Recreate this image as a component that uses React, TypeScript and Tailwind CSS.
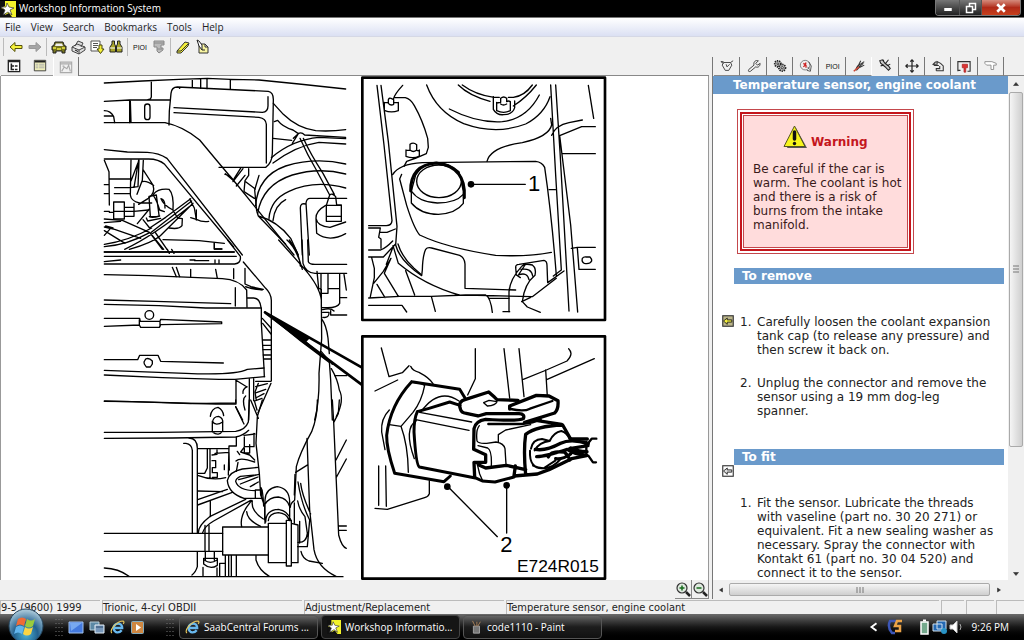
import React, { useState } from 'react';

const stroke = { fill: 'none', stroke: '#000', strokeWidth: 4, strokeLinejoin: 'round', strokeLinecap: 'round' } as const;

// Small 16x16 icon wrapper
const Icon: React.FC<{ children: React.ReactNode; className?: string }> = ({ children, className = 'h-4 w-4' }) => (
    <svg viewBox="0 0 16 16" className={`shrink-0 ${className}`} fill="none" stroke="#222" strokeWidth="1" aria-hidden="true">
        {children}
    </svg>
);

const StarLogo = ({ className }: { className?: string }) => (
    <Icon className={className}>
        <rect width="16" height="16" fill="#111" stroke="none" />
        <path d="M5 0H16V16H12L9 12L5 14L6 9L1 7L5 5Z" fill="#f3f32a" stroke="none" />
        <path d="M7 2L9 6L14 7L10 9L12 14L8 11L3 14L5 9L1 6L6 6Z" fill="#fff" stroke="#333" strokeWidth=".7" />
    </Icon>
);

const ArrowLeft = () => (
    <Icon>
        <path d="M2 8L7 3.5V6.5H14V9.5H7V12.5Z" fill="#f5f03a" stroke="#55520a" />
    </Icon>
);

const ArrowRight = () => (
    <Icon>
        <path d="M14 8L9 3.5V6.5H2V9.5H9V12.5Z" fill="#a5a5a5" stroke="#999" />
    </Icon>
);

const Car = () => (
    <Icon>
        <path d="M4 3H12L13.5 7H15V11H14V14H11V12H5V14H2V11H1V7H2.5Z" fill="#77751d" stroke="#222" />
        <path d="M5 4.5H11L12 7H4Z" fill="#eee" stroke="none" />
        <path d="M2 9H5M11 9H14M6 10H10" stroke="#f0ec45" strokeWidth="1.5" />
    </Icon>
);

const Printer = () => (
    <Icon>
        <path d="M5 7L8 2L13 4L11 8M2 8L7 5L15 8V11L9 15L2 12ZM2 8L9 11L15 8M9 11V15" fill="#ddd" stroke="#444" />
        <path d="M5 11L8 12.5" stroke="#111" />
    </Icon>
);

const PageDown = () => (
    <Icon>
        <path d="M2 2H11V12H2ZM4 4.500H9M4 6.500H9M4 8.500H8" fill="#fff" stroke="#555" />
        <path d="M10 6H13V10H15L11.500 14.500L8 10H10Z" fill="#f5f03a" stroke="#4a4810" />
    </Icon>
);

const Binoculars = () => (
    <Icon>
        <path d="M4 2H6.500V5L7.500 7V13H2V8L4 5ZM12 2H9.500V5L8.500 7V13H14V8L12 5Z" fill="#a8a42a" stroke="#222" />
        <path d="M2 9H7M9 9H14" stroke="#fff" />
    </Icon>
);

const Funnel = () => (
    <Icon>
        <path d="M3 2H13V6H10V9H12V11L8 14L6 12V8H3ZM3 4H13M6 10H11" fill="#bbb" stroke="#888" />
    </Icon>
);

const Eraser = () => (
    <Icon>
        <path d="M2 12L10 3L14 4L13 7L6 14L2 14Z" fill="#f5f03a" stroke="#333" />
        <path d="M2 12L6 12L13 5" stroke="#333" />
    </Icon>
);

const NotePen = () => (
    <Icon>
        <path d="M5 5H11L14 8V14H5ZM11 5V8H14" fill="#f8f5a2" stroke="#333" />
        <path d="M3 1L5 7L8 11L8 6L5 2Z" fill="#fff" stroke="#222" />
        <path d="M8 11H11" />
    </Icon>
);

const PioiLabel = () => <span className="font-['Liberation_Sans'] text-[7px] leading-none text-[#111]">PIOI</span>;

const toolbarGroups: { name: string; icon: React.ReactNode }[][] = [
    [
        { name: 'Back', icon: <ArrowLeft /> },
        { name: 'Forward', icon: <ArrowRight /> },
    ],
    [
        { name: 'Select car', icon: <Car /> },
        { name: 'Print', icon: <Printer /> },
        { name: 'Next document', icon: <PageDown /> },
        { name: 'Find', icon: <Binoculars /> },
    ],
    [
        { name: 'Symbols', icon: <PioiLabel /> },
        { name: 'Filter', icon: <Funnel /> },
    ],
    [
        { name: 'Highlight', icon: <Eraser /> },
        { name: 'Add note', icon: <NotePen /> },
    ],
];

const viewTabs = [
    {
        name: 'Tree',
        icon: (
            <Icon className="h-[14px] w-[14px]">
                <path d="M1.500 1.500H14.500V14.500H1.500ZM1.500 3H14.500" fill="#fff" stroke="#222" strokeWidth="1.500" />
                <path d="M5 5V12H8M5 8H8M9 8H12M9 12H12" strokeWidth="1.800" />
            </Icon>
        ),
    },
    {
        name: 'Document',
        icon: (
            <Icon className="h-[14px] w-[14px]">
                <path d="M1.500 1.500H14.500V13.500H1.500Z" fill="#eeeeba" stroke="#333" />
                <path d="M2 3H14" strokeWidth="2" />
                <path d="M3 6H6M3 8H6M3 10H6M7 6H13M7 8H13M7 10H13" stroke="#aaa" />
            </Icon>
        ),
    },
    {
        name: 'Picture',
        icon: (
            <Icon className="h-[14px] w-[14px]">
                <path d="M1.500 2.500H14.500V14.500H1.500ZM1.500 4.500H14.500M3 13L6 8L9 10L11 6L13 13M4 7H6" stroke="#aaa" strokeWidth="1.300" />
            </Icon>
        ),
    },
];

const infoTabs = [
    {
        name: 'Specifications',
        icon: (
            <Icon className="h-[14px] w-[14px]">
                <path d="M4 4H12L13.500 7L10 13H6L2.500 7ZM1 3L4 5M15 2L12 4M1 3H4M7 6L8 9L11 6" stroke="#333" />
            </Icon>
        ),
    },
    {
        name: 'Tools',
        icon: (
            <Icon className="h-[14px] w-[14px]">
                <path d="M2 12L8 7C7 3 10 1 13 2L10 5L12 7L15 5C15 9 12 10 10 9L4 14C2 15 1 14 2 12Z" fill="#eee" stroke="#333" />
            </Icon>
        ),
    },
    {
        name: 'Technical description',
        icon: (
            <Icon className="h-[14px] w-[14px]">
                <circle cx="5.500" cy="5.500" r="3.500" fill="#bbb" strokeWidth="2" strokeDasharray="1.500 1" />
                <circle cx="10.500" cy="10" r="3.800" fill="#bbb" strokeWidth="2" strokeDasharray="1.500 1" />
                <circle cx="5.500" cy="5.500" r="1" fill="#fff" />
                <circle cx="10.500" cy="10" r="1.300" fill="#fff" />
            </Icon>
        ),
    },
    {
        name: 'Fault diagnosis',
        icon: (
            <Icon className="h-[14px] w-[14px]">
                <circle cx="7" cy="7" r="5.500" fill="#eee" stroke="#777" />
                <path d="M9 13L13 14L14 8L11 3M10 9L12 12" stroke="#444" />
                <path d="M5 5L8 7V10M8 4L7 7L5 9" stroke="#c22" strokeWidth="1.500" />
            </Icon>
        ),
    },
    { name: 'Symbols', icon: <PioiLabel /> },
    {
        name: 'Wiring',
        icon: (
            <Icon className="h-[14px] w-[14px]">
                <path d="M4 12L8 7L14 3M5 13L8 10L14 7M5 10L8 6L10 2M8 9L13 5" stroke="#333" strokeWidth="1.200" />
                <path d="M2 14L8 9" stroke="#c43" strokeWidth="1.800" />
            </Icon>
        ),
    },
    {
        name: 'Adjustment',
        icon: (
            <Icon className="h-[14px] w-[14px]">
                <path d="M2 3L5 2L8 6L12 9L14 12L12 14L8 10L3 6ZM12 2L8 7M6 2L7 5M10 9L14 7M3 9L7 8" fill="#ccc" stroke="#222" strokeWidth="1.200" />
            </Icon>
        ),
    },
    {
        name: 'Location',
        icon: (
            <Icon className="h-[14px] w-[14px]">
                <path d="M8 1V15M1 8H15M6 3L8 1L10 3M6 13L8 15L10 13M3 6L1 8L3 10M13 6L15 8L13 10" strokeWidth="1.400" />
            </Icon>
        ),
    },
    {
        name: 'Service',
        icon: (
            <Icon className="h-[14px] w-[14px]">
                <path d="M6 13.500H14V8L11 5L7 3V6H2.500L5 3.500H7M2.500 6L4 7.500H9M6 13.500V11H10V8" stroke="#333" strokeWidth="1.200" />
            </Icon>
        ),
    },
    {
        name: 'Bulletins',
        icon: (
            <Icon className="h-[14px] w-[14px]">
                <path d="M1 14V3H15V14H12M1 13H4" stroke="#333" strokeWidth="1.300" />
                <path d="M6 6H12V10H10V15H8V10H6Z" fill="#d33" stroke="#a22" strokeWidth=".8" />
            </Icon>
        ),
    },
    {
        name: 'References',
        icon: (
            <Icon className="h-[14px] w-[14px]">
                <path d="M1 3H9L14 5V7H11V12H8V7H3L1 5Z" fill="#fff" stroke="#888" />
            </Icon>
        ),
    },
];

const menuItems = ['File', 'View', 'Search', 'Bookmarks', 'Tools', 'Help'];

// Engine bay overview with the two detail frames
const EngineDrawing = () => (
    <svg viewBox="104 76 506 504" className="h-full max-w-full" role="img" aria-label="Engine coolant temperature sensor, E724R015">
        {/* Upper part of the engine bay */}
        <g transform="translate(100 75) scale(.33333)" {...stroke}>
            <path d="M16 24L130 18L240 13L325 10L394 13L480 15L600 27L740 42M157 17V66Q156 73 146 74M16 79L92 75H212M92 76V143M94 79L96 142M280 15V36M305 13V40M324 11V41M394 13V42" />
            <path d="M16 107Q35 107 44 125L47 143M16 123H40" />
            <rect x="137" y="87" width="16" height="47" rx="8" />
            <path d="M210 150L211 108L216 55Q218 36 235 36L508 49Q524 52 523 76L520 235Q519 265 500 277H360M225 98L490 112Q508 111 507 90V65M225 113L480 127Q501 130 502 148V264M240 37L242 40" />
            <path d="M16 143H198Q252 154 302 195L352 255L420 336L585 540" />
            <path d="M16 224L85 231L145 232Q180 234 204 250L430 540M16 252H145Q178 251 197 268L404 516" />
            <path d="M523 85L553 118Q596 160 650 167Q695 170 740 164M526 140L536 136Q550 155 582 165L598 176L580 205M522 190L578 196M583 190L598 176Q607 170 617 180L740 187" />
            <path d="M517 248Q580 194 660 187L740 191M522 264Q592 212 660 202L740 207M470 392Q476 303 560 273Q650 246 740 267M476 415Q490 329 580 300Q660 276 740 297M510 430Q514 374 570 349Q647 313 740 339M522 437Q527 390 560 374" />
            <path d="M603 190Q625 240 652 285L692 360M613 190Q634 237 672 295L706 358M692 360L682 391V439H727V390H713L710 365Q700 353 692 360M682 391H727M682 424H727" />
            <path d="M743 370H633Q623 370 621 384L631 540M620 387Q604 383 604 399L610 540M680 391Q650 408 651 430Q655 454 693 457L740 441M651 430L653 475Q690 503 740 476" />
            <path d="M478 423Q535 438 575 490L598 540M474 411L478 423L560 508M480 301L467 345L473 408M435 350L466 370M440 320L469 342M435 350L438 317L449 301V281M378 298Q396 300 402 316L426 278M402 320L432 281M412 333L438 301M379 296L405 318" />
            <path d="M16 256L30 290L31 390M96 255L94 360Q96 378 121 384H158M105 337L119 255M96 318L117 263M133 256L130 316L114 358M120 255L117 335L94 338M31 312H94M47 338H94M16 329H28M16 356H28M132 284L162 330Q170 354 148 370L119 388M130 320Q142 316 164 331M46 356H94M31 412H44M16 409H31M44 381H76V432H44ZM76 397H105V424H76M44 409H76M76 409H105M105 385V421M105 409L148 405" />
            <path d="M163 358Q177 340 210 343Q225 358 222 405Q194 391 186 371Q199 374 198 399M163 361Q173 375 182 405L196 410M150 364L172 360L180 420M150 364L154 425H172M151 402L115 446M151 425Q159 430 182 423M142 429L146 438L185 430M132 434L152 459L200 427L275 371M157 472L278 378M222 406L236 429L250 431L249 452Q241 464 210 459M275 428L292 433Q310 442 329 439M292 405V435" />
            <path d="M16 432L70 436Q119 458 153 473L194 523M16 443L65 439M16 508Q90 497 158 459M16 515Q85 510 152 473M16 456L47 463L125 490M16 467L78 505M32 463L16 481M42 459L20 453M77 523Q160 485 280 388M91 523Q160 503 184 482L282 385M192 494L300 497L376 505M154 475L190 523M170 474L204 523M346 503V522H369M272 372L286 399L292 433M16 531H406" />
        </g>

        {/* Valve cover */}
        <g transform="translate(100 240) scale(.33333)" {...stroke}>
            <path d="M16 36H405M16 49H412M16 72H407Q427 70 424 49L386 0M16 65L65 60M205 28L211 40M218 28L225 40M346 9V27H368M273 60H288M287 62H329M348 60V68M360 60V68M275 88V110M350 88L355 115M404 86V116M220 82L232 110M232 82L242 110" />
            <path d="M16 104L150 107L370 116Q420 119 443 150L444 202M409 143V198M433 66L500 145Q516 160 517 181V422M438 85V132L456 140L493 148Q464 151 440 140M444 142L490 150M444 174H464Q482 174 486 202" />
            <path d="M16 180L170 184L395 191M16 193L180 197L320 204H487V250L495 384L496 410M16 235H122L124 244H183L185 238L368 246V251L185 254L181 262H125L121 255L16 259M121 239V256M183 245V260" />
            <circle cx="151" cy="225" r="13" />
            <path d="M16 359H116L122 346H177L185 364L373 369M16 391L260 400Q410 406 445 388L495 384M16 405L190 413L360 418H408L497 410M135 366L140 357Q150 352 160 363V372L154 381H142L136 372Z" />
            <path d="M16 483L185 487L350 492H411V420M451 416V474L449 540M464 416V482M410 420L444 441M444 440Q430 448 432 460M440 468Q428 477 438 510M410 500L431 540" />
            <path d="M490 235L516 264M491 250L516 282M492 300H516M492 316H516M492 329H516M493 345H516M494 357H516M470 424H516M516 430L477 518M470 440L505 431M470 459L500 448M470 474L495 461M470 482L489 475M478 430L468 456L472 481M466 482L474 510" />
            <path d="M539 0L615 85Q662 139 667 180L668 296L660 400Q662 483 647 540M564 0Q593 25 610 88M571 0Q601 37 604 78M609 0L612 70Q620 98 648 100H743M626 0L628 65Q631 73 648 73H743M654 94L659 145L667 148V202Q713 207 722 190V103M666 100V160H687V102M690 146H722M735 103L742 150M671 209Q696 203 705 213M672 232Q691 235 690 217L671 217M695 212V225H743M722 173H743" />
            <path d="M668 237Q682 255 687 294L691 341M667 335L700 373M691 364L695 420L700 540M697 386Q716 418 721 450Q737 480 712 530M707 407H743" />
            <path d="M498 217L788 382M498 217L788 434" strokeWidth="8" />
            <path d="M498 217L630 294L620 305L690 367L606 304Z" fill="#000" />
        </g>

        {/* Lower part of the engine bay */}
        <g transform="translate(100 400) scale(.33333)" {...stroke}>
            <path d="M16 97L180 97L410 94Q439 90 448 66L451 0M16 115L220 114L410 111Q432 108 449 91M410 20Q427 56 435 72M16 4L100 5L275 11L410 9V0M334 49Q337 25 357 22Q372 29 374 47M340 67Q343 49 359 49Q373 54 371 68V93Q360 110 340 96Z" />
            <path d="M340 64Q350 80 371 66M270 114Q295 115 295 145V400M254 130H261Q278 132 280 151V400M16 400H371M16 454H371M295 146H390M325 146V204L317 220H296M333 146V235M339 165L354 163V150M348 160L390 157L391 210M339 182H350V203H340V218H355V232H340M296 226Q338 243 380 233M412 112V138H390L388 225M376 195V209M436 111V140H465V100M437 140L425 156L452 165L467 180M436 145V159H452V134M435 106L468 102M411 183Q423 170 467 186M417 187L412 214M415 154L422 164" />
            <path d="M478 202L430 207Q389 216 385 242Q389 281 435 295H469M478 224L424 229Q411 235 410 244Q418 271 469 272M469 270H488V295H469ZM419 239L480 223M424 252L477 231M454 260L478 246M296 273L370 275M296 299L385 268M296 315L400 277M298 398Q298 376 332 350L440 298M311 398Q316 379 344 363L455 301M334 304V350M428 380Q422 352 444 320L458 301M443 335Q445 361 485 379M460 303Q455 332 493 357" />
            <path d="M490 0L475 50L471 130L481 220L485 285L497 319V360M455 0L478 55M655 0Q656 50 638 95Q602 160 592 200L587 300M486 263Q492 272 494 318M498 370V300Q500 265 535 260Q571 265 572 305V362M499 312Q510 292 538 291Q566 295 572 320M500 366Q500 330 538 328Q568 332 576 362M508 362Q510 340 538 338Q563 340 570 360" />
            <path d="M624 115L632 330L645 449Q655 503 711 529M700 0L704 65L719 405Q728 440 742 445M721 0L718 40L704 68M711 180L742 120M711 234L742 177M719 378H742M719 391H742M590 217L627 194M597 246Q608 314 632 360L625 440L596 440M605 250Q609 285 635 342M596 303Q601 330 618 350L625 400Q622 430 597 427M588 223L586 285M586 302Q574 310 574 322M586 309V370M602 364V429" />
            <path d="M371 381H508V465H371ZM508 370H562V488H508ZM562 361H577V498H562ZM577 370L597 375V488H577M471 467V480Q480 511 511 529M606 454Q610 475 630 483L670 490M295 455V500Q290 517 279 525M16 504Q58 505 90 529M16 530H732M318 376V452M330 376V452M319 455V482M346 455V481M314 475H355V496Q334 510 314 492ZM316 480Q334 494 354 480M312 502V528M354 504V528M362 529V490H378M379 468V528M389 468V528M397 468V528M412 468V528" />
        </g>

        {/* Detail 1: expansion tank */}
        <g transform="translate(360 75) scale(.33333)" {...stroke}>
            <rect x="10" y="8" width="728" height="727" fill="#fff" strokeWidth="8" />
            <path d="M54 31L75 210L99 437Q98 452 82 452H29M66 31L88 200L114 454L110 510Q122 557 188 602L190 585Q191 542 200 523Q205 516 218 519L302 541Q317 548 318 567V640L470 645M131 31Q108 56 104 70M76 82V106Q96 115 118 107V82M76 83H88V74Q91 67 98 71L104 74V88Q95 93 88 85M105 83H118M105 68H139Q155 72 166 92Q191 136 206 190L208 217L202 236Q170 251 143 259L135 274M141 225V244Q163 252 181 243V225M141 226H153V208Q163 200 173 209V226L181 228M154 226Q163 233 172 226" />
            <path d="M203 30Q232 110 314 146Q411 181 500 147Q555 118 573 65M271 102Q355 145 430 140Q503 132 541 60M298 30Q330 62 393 79M310 30Q350 60 405 67H421M532 30Q502 68 463 93M520 30Q496 63 463 67H448M403 65V103Q413 121 434 119Q461 119 467 98V78M413 82V107Q434 117 454 107V80Q448 76 443 80V70Q434 62 425 70V82L413 84M425 87Q433 93 443 87" />
            <path d="M575 30L590 300L607 585L583 603M590 30L603 230L630 708M688 31L704 130M709 155H668L602 182L635 450L656 711M578 181Q590 151 630 143L670 135M575 130L578 150Q570 185 490 203Q395 216 384 259M609 236H709M570 344H589M709 517H655L637 520M655 518L660 583H709" />
            <path d="M101 299Q120 267 190 263L530 259Q549 261 557 277Q578 420 592 602M128 298L122 312L143 391Q165 460 182 480Q264 519 410 541Q510 546 577 532M470 577Q470 568 480 568L555 556Q564 558 564 571L566 623L615 588M117 507Q128 545 165 580L184 596M102 512L118 565Q195 630 300 660M82 568L102 516M140 587L167 660M29 459H64L59 487L66 492V520M64 472H84L109 462M29 525H65Q82 518 101 498M29 546H73L109 508M38 548L46 580V608L34 665M29 669L122 664H217L320 660H380Q395 668 400 712M44 625L73 589L96 550L76 595L118 664M54 628L78 668M217 664L229 709M29 691H129L143 711M320 660L520 665L592 610M391 670H450M432 710H452M488 680L515 667" />
            <path d="M450 710V650Q453 612 488 574Q495 564 520 570Q533 580 528 601Q496 627 490 680L505 696L544 712M478 600Q505 590 510 614M486 583Q517 578 521 603M470 577L472 600L484 608M480 597L500 567" />
            <path d="M670 550Q674 545 681 546H693Q699 552 698 558Q693 568 676 565Q667 561 670 550Z" />
            <path d="M157 348V384Q185 418 238 418Q291 415 313 385V348L300 290Q270 263 232 263Q190 266 170 300Z" fill="#fff" />
            <path d="M157 348Q180 382 235 384Q290 384 313 358" />
            <ellipse cx="240" cy="319" rx="67" ry="49" fill="#fff" />
            <path d="M155 348Q154 270 232 264Q322 275 316 368" strokeWidth="9" />
            <path d="M345 328H499" />
            <circle cx="336" cy="328" r="8" fill="#000" />
            <text x="507" y="348" fontFamily="Liberation Sans, Arial, sans-serif" fontSize="66" fill="#000" stroke="none">1</text>
        </g>

        {/* Detail 2: sensor connector */}
        <g transform="translate(360 332) scale(.33333)" {...stroke}>
            <rect x="10" y="13" width="728" height="727" fill="#fff" strokeWidth="8" />
            <path d="M67 48L90 134L130 122L150 101M155 103Q160 116 180 121Q211 137 222 155M48 177L116 144M349 50V140L326 189M435 50L452 198M480 50L495 194M629 50Q645 66 624 87Q560 116 493 142M706 80L563 143M560 114L565 193M59 402V520M80 402L82 523M211 446V485Q209 493 197 497L85 532L48 529" />
            <path d="M158 150L186 155L197 160Q188 208 162 241L126 283L86 277M126 283Q147 340 148 421M186 239Q240 165 300 207M172 266Q133 290 166 380M91 234Q65 260 68 300L78 353" />
            <path d="M158 149L302 172L318 198M158 149Q93 219 83 310Q82 350 107 424L255 449L274 432" strokeWidth="9" />
            <path d="M175 239L210 229L272 210L303 220M175 239Q165 260 165 300Q171 399 181 405L353 439L370 447L408 450L465 435" strokeWidth="9" />
            <path d="M170 263L330 295M182 241L338 270" />
            <path d="M320 202L389 180L407 196L414 203L477 205M452 231V222L532 190L570 192L597 206Q599 232 587 243L497 271M320 202Q296 208 304 230Q306 242 322 244L357 252L382 245H480Q499 246 493 260Q480 268 380 262Q349 267 345 290L344 352L380 368V391H345L347 435" strokeWidth="10" />
            <path d="M455 231Q495 240 513 230L580 207M388 276H487Q525 272 545 262" strokeWidth="7" />
            <path d="M357 341L386 348Q399 355 397 402M361 281Q350 294 354 327Q360 336 383 334L411 330Q435 334 438 350L441 397M418 331V308L440 294L515 278M355 397L362 426L370 444M374 212L390 205L414 209Q410 220 385 222Z" />
            <path d="M358 398L380 408L442 400L500 413M500 429Q493 355 500 307Q532 282 611 279L635 321M608 277L535 266M469 402L465 432L535 426L570 413L638 380L683 371M638 321H685" strokeWidth="10" />
            <path d="M516 350Q521 322 549 321L572 327Q584 301 607 297Q625 302 632 322M572 327Q541 330 527 355M513 356Q510 413 555 408L589 386M522 401Q569 423 604 382" strokeWidth="6" />
            <path d="M529 352Q560 358 605 334Q635 319 688 335M533 374Q560 373 625 352Q646 367 683 370M568 375Q575 356 616 360Q630 373 632 384M632 350L687 341M635 348Q654 359 684 359M590 380Q611 383 635 366" strokeWidth="10" />
            <path d="M688 333L698 320H712M688 371L702 391H711M682 330V371" strokeWidth="7" />
            <path d="M267 464L415 614M443 460V603" />
            <circle cx="265" cy="464" r="8" fill="#000" />
            <circle cx="443" cy="460" r="8" fill="#000" />
            <g fontFamily="Liberation Sans, Arial, sans-serif" fill="#000" stroke="none">
                <text x="424" y="660" fontSize="66">2</text>
                <text x="474" y="720" fontSize="52">E724R015</text>
            </g>
        </g>
    </svg>
);

const StepMark = ({ active }: { active?: boolean }) => (
    <Icon className="h-3 w-3">
        <rect x="1" y="1" width="14" height="14" fill={active ? '#bbb58b' : '#fff'} stroke="#333" strokeWidth="1.500" />
        <path d="M2 8L7 4V6.500H13V9.500H7V12.500Z" fill={active ? '#f5f03a' : '#ddd'} stroke="#222" strokeWidth="1.200" />
    </Icon>
);

const WarningBox = () => (
    <section className="ml-6 mt-[15px] w-[177px] border border-[#c4474c] bg-white p-[2px]">
        <div className="border-2 border-[#c4161c] p-px">
            <div className="h-[133px] border border-[#c4474c] bg-[#ffdcdc] pl-[9px] pt-[9px]">
                <h2 className="flex gap-1 pl-[30px] text-[12px] font-bold leading-[18px] text-[#c4161c]">
                    <svg viewBox="0 0 24 24" className="h-6 w-6" aria-hidden="true">
                        <path d="M13 3L24 23H4Z" fill="#555" />
                        <path d="M11.500 1L22 21.500H1Z" fill="#f8f51c" stroke="#555320" />
                        <path d="M11.500 7V14" stroke="#111" strokeWidth="3.500" strokeLinecap="round" />
                        <circle cx="11.500" cy="18.500" r="1.700" fill="#111" />
                    </svg>
                    <span className="pt-2">Warning</span>
                </h2>
                <p className="mt-[11px] text-[12px] leading-[14px] text-[#3a1a1a]">
                    Be careful if the car is warm. The coolant is hot and there is a risk of burns from the intake manifold.
                </p>
            </div>
        </div>
    </section>
);

const SectionTitle = ({ children }: { children: React.ReactNode }) => (
    <h2 className="ml-[21px] mr-1 h-4 bg-[#6a9acb] pl-2 text-[12px] font-bold leading-4 text-white">{children}</h2>
);

const Step = ({ number, mark, children }: { number: number; mark?: boolean; children: React.ReactNode }) => (
    <li className="flex pl-[9px] pr-2">
        <span className="w-[18px] shrink-0">{mark && <StepMark active />}</span>
        <span className="w-[17px] shrink-0">{number}.</span>
        <span>{children}</span>
    </li>
);

const InfoPanel = () => (
    <div className="min-h-0 flex-1 overflow-hidden bg-white text-[12px] leading-[14px] text-[#222]">
        <h1 className="h-[18px] bg-[#6a9acb] pl-5 text-[12px] font-bold leading-[18px] text-white">
            Temperature sensor, engine coolant
        </h1>
        <WarningBox />
        <div className="mt-[14px]">
            <SectionTitle>To remove</SectionTitle>
            <ol className="mt-[31px] flex flex-col gap-[19px]">
                <Step number={1} mark>Carefully loosen the coolant expansion tank cap (to release any pressure) and then screw it back on.</Step>
                <Step number={2}>
                    Unplug the connector and remove the sensor using a 19 mm dog-leg
                    <br />
                    spanner.
                </Step>
            </ol>
        </div>
        <div className="mt-[31px]">
            <SectionTitle>To fit</SectionTitle>
            <div className="h-[31px] pl-[9px]">
                <StepMark />
            </div>
            <ol>
                <Step number={1}>
                    Fit the sensor. Lubricate the threads with vaseline (part no. 30 20 271) or equivalent. Fit a new sealing washer as necessary. Spray the connector with Kontakt 61 (part no. 30 04 520) and connect it to the sensor.
                </Step>
            </ol>
        </div>
    </div>
);

const IeLogo = () => (
    <Icon className="h-[15px] w-[15px]">
        <path d="M12.500 11Q10 14 6.500 13Q3 11 4 7Q6 3 10 4Q13 5 13 8.500H5" stroke="#69b9ee" strokeWidth="2.500" />
        <path d="M2 14C-1 11 7 1 14 1C16 2 14 4 14 4" stroke="#e9c85b" strokeWidth="1.200" />
    </Icon>
);

const tasks = [
    { name: 'SaabCentral Forums ...', icon: <IeLogo /> },
    { name: 'Workshop Informatio...', icon: <StarLogo className="h-[14px] w-[14px]" />, active: true },
    {
        name: 'code1110 - Paint',
        icon: (
            <Icon className="h-[14px] w-[14px]">
                <path d="M5 7H12V15H5Z" fill="#777" stroke="#aaa" />
                <path d="M7 7L4 1M9 7V2M10 7L13 2" stroke="#b2875b" />
            </Icon>
        ),
    },
];

const Grip = () => (
    <svg viewBox="0 0 8 18" className="h-[18px] w-2 shrink-0" aria-hidden="true">
        <path d="M1 1V18M4 1V18M7 1V18" stroke="#777" strokeDasharray="1 3" />
    </svg>
);

const Taskbar = () => (
    <footer className="flex h-[26px] shrink-0 items-center bg-linear-to-b from-[#6c6c6c] via-[#181818] via-50% to-black pl-2 pr-[15px] font-['Open_Sans','Noto_Sans',sans-serif] text-[10px] text-white">
        <button aria-label="Start" className="relative z-10 -mt-1 h-[34px] w-9 shrink-0">
            <svg viewBox="0 0 36 36" className="h-9 w-9">
                <defs>
                    <radialGradient id="orb" cx="50%" cy="75%" r="70%">
                        <stop offset="0" stopColor="#4bb4d8" />
                        <stop offset=".5" stopColor="#23618f" />
                        <stop offset="1" stopColor="#a5c4d6" />
                    </radialGradient>
                </defs>
                <circle cx="18" cy="18" r="17" fill="url(#orb)" stroke="#24445c" />
                <path d="M10 11Q14 8 18 11L16 18Q12 15 8 18Z" fill="#ef6b36" />
                <path d="M19 11Q23 14 27 11L25 18Q21 21 17 18Z" fill="#9acb3d" />
                <path d="M8 19Q12 16 16 19L14 26Q10 23 6 26Z" fill="#62b5ed" />
                <path d="M17 19Q21 22 25 19L23 26Q19 29 15 26Z" fill="#fbd544" />
            </svg>
        </button>
        <div className="ml-[11px] flex items-center gap-[5px]">
            <Grip />
            <button aria-label="Show desktop">
                <Icon><path d="M1 3H15V14H1Z" fill="#4379de" stroke="#a3c3ed" /><path d="M2 4H14L3 12Z" fill="#77a9f1" stroke="none" /></Icon>
            </button>
            <button aria-label="Switch windows">
                <Icon><path d="M1 3H10V11H1Z" fill="#5c89a5" stroke="#b7ced8" /><path d="M6 6H15V14H6Z" fill="#7797ba" stroke="#e5eef5" /><path d="M7 8H14" stroke="#2d4b6c" /></Icon>
            </button>
            <button aria-label="Internet Explorer"><IeLogo /></button>
            <button aria-label="Media player">
                <Icon><rect x="1.500" y="2.500" width="12" height="12" rx="1" fill="#ce8742" stroke="#83acc0" /><path d="M6 5L11 8.500L6 12Z" fill="#fff" stroke="none" /></Icon>
            </button>
        </div>
        <div className="ml-5 mr-[5px]"><Grip /></div>
        <div className="flex min-w-0 flex-1 gap-[3px]">
            {tasks.map((task) => (
                <button
                    key={task.name}
                    className={`flex h-6 w-[139px] items-center gap-1 overflow-hidden whitespace-nowrap rounded-sm border pl-[5px] ${
                        task.active ? 'border-[#444] bg-[#151515]' : 'border-[#555] bg-linear-to-b from-[#666] via-[#1d1d1d] via-50% to-[#111]'
                    }`}
                >
                    {task.icon}
                    {task.name}
                </button>
            ))}
        </div>
        <div className="flex shrink-0 items-center">
            <button aria-label="Show hidden icons" className="mr-2">
                <Icon className="h-[10px] w-[10px]"><path d="M12 2L4 8L12 14" stroke="#fff" strokeWidth="3" /></Icon>
            </button>
            <Icon><path d="M9 2H3Q0 8 5 14H8" stroke="#3c56b7" strokeWidth="2.500" /><path d="M15 2H10L8 7H13V12H8" stroke="#eba347" strokeWidth="2.500" /></Icon>
            <Icon className="ml-[13px] h-4 w-4"><rect x="5" y="3" width="7" height="12" fill="#75a98d" stroke="#fff" strokeWidth="1.500" /><path d="M7 1.500H10" stroke="#fff" strokeWidth="2" /></Icon>
            <Icon><path d="M5 2H14V10H5ZM1 5H10V12H1Z" fill="#2469b3" stroke="#d2e2ee" /><circle cx="12" cy="12" r="3" fill="#2993c5" stroke="none" /></Icon>
            <Icon><path d="M2 6H5L9 2V14L5 10H2Z" fill="#fff" stroke="#ccc" /><path d="M12 5Q14 8 12 11" stroke="#aaa" /></Icon>
            <time className="ml-2">9:26 PM</time>
        </div>
    </footer>
);

const App: React.FC = () => {
    const [viewTab, setViewTab] = useState('Picture');
    const [infoTab, setInfoTab] = useState('Adjustment');

    return (
        <div className="flex h-screen flex-col overflow-hidden bg-[#f0f0f0] font-['DejaVu_Sans',Verdana,sans-serif] text-[#222]">
            {/* Title bar */}
            <header className="flex h-[18px] shrink-0 items-center border-b border-[#777] bg-black pr-[3px] font-['Open_Sans','Noto_Sans',sans-serif] text-[10px] text-white">
                <StarLogo className="h-4 w-4" />
                <span className="ml-[3px] flex-1">Workshop Information System</span>
                <div className="flex h-4 self-start overflow-hidden rounded-b border border-t-0 border-[#777]">
                    <button aria-label="Minimize" className="flex w-6 items-center justify-center border-r border-[#555] bg-linear-to-b from-[#777] to-[#222]">
                        <Icon className="h-3 w-3"><path d="M3 10H13" stroke="#fff" strokeWidth="4" /></Icon>
                    </button>
                    <button aria-label="Restore" className="flex w-[22px] items-center justify-center border-r border-[#555] bg-linear-to-b from-[#777] to-[#222]">
                        <Icon className="h-3 w-3"><path d="M6 5V2H14V10H11M2 6H10V14H2Z" stroke="#fff" strokeWidth="2" /></Icon>
                    </button>
                    <button aria-label="Close" className="flex w-[38px] items-center justify-center bg-linear-to-b from-[#d48a7c] via-[#b02a18] via-50% to-[#c8401c]">
                        <Icon className="h-3 w-3"><path d="M3 3L13 13M13 3L3 13" stroke="#fff" strokeWidth="3.500" /></Icon>
                    </button>
                </div>
            </header>

            {/* Menu */}
            <nav className="flex h-[19px] shrink-0 items-center gap-[10px] border-b border-[#d5d8e5] bg-linear-to-b from-white to-[#dbe0f3] pl-[5px] font-['Open_Sans','Noto_Sans',sans-serif] text-[10px]">
                {menuItems.map((item) => (
                    <button key={item}>{item}</button>
                ))}
            </nav>

            {/* Toolbar */}
            <div className="flex h-5 shrink-0 items-center pl-[3px]">
                {toolbarGroups.map((group, index) => (
                    <div key={index} className="flex h-[18px] items-center gap-[3px] border-l border-[#bbb] pl-1 pr-[3px]">
                        {group.map((tool) => (
                            <button key={tool.name} aria-label={tool.name} className="flex h-4 min-w-4 items-center justify-center">
                                {tool.icon}
                            </button>
                        ))}
                    </div>
                ))}
            </div>

            <main className="flex min-h-0 flex-1">
                {/* Picture view */}
                <section className="flex min-w-0 flex-1 flex-col">
                    <div className="flex h-[19px] shrink-0 pl-px">
                        {viewTabs.map((tab) => (
                            <button
                                key={tab.name}
                                aria-label={tab.name}
                                onClick={() => setViewTab(tab.name)}
                                className={`flex w-[26px] items-center justify-center ${
                                    viewTab === tab.name ? 'border-l border-r border-l-white border-r-[#777]' : 'border-b border-b-[#999]'
                                }`}
                            >
                                {tab.icon}
                            </button>
                        ))}
                        <div className="flex-1 border-b border-[#888]" />
                    </div>
                    <div className="flex min-h-0 flex-1 justify-center border-l border-r border-[#999] bg-white pl-[3px]">
                        <EngineDrawing />
                    </div>
                    <div className="flex h-[19px] shrink-0 justify-end">
                        <button aria-label="Zoom in" className="flex w-[17px] items-center justify-center border-b border-r border-[#888]">
                            <Icon><circle cx="7" cy="7" r="5" fill="#dfe9df" stroke="#333" strokeWidth="1.200" /><path d="M11 11L15 15" strokeWidth="2.500" /><path d="M4.500 7H9.500M7 4.500V9.500" stroke="#176b1e" strokeWidth="1.500" /></Icon>
                        </button>
                        <button aria-label="Zoom out" className="flex w-[17px] items-center justify-center border-b border-r border-[#888]">
                            <Icon><circle cx="7" cy="7" r="5" fill="#dfe9df" stroke="#333" strokeWidth="1.200" /><path d="M11 11L15 15" strokeWidth="2.500" /><path d="M4.500 7H9.500" stroke="#176b1e" strokeWidth="1.500" /></Icon>
                        </button>
                    </div>
                </section>

                {/* Information view */}
                <aside className="ml-[3px] flex w-[312px] shrink-0 flex-col border-l border-[#777]">
                    <div className="flex h-[19px] shrink-0 pl-px">
                        <div className="grid w-[290px] grid-cols-11">
                            {infoTabs.map((tab, index) => (
                                <button
                                    key={tab.name}
                                    aria-label={tab.name}
                                    onClick={() => setInfoTab(tab.name)}
                                    className={`flex justify-center border-r pl-px ${
                                        infoTab === tab.name ? 'items-start pt-px' : 'items-center border-b border-b-[#888]'
                                    } ${infoTabs[index + 1]?.name === infoTab ? 'border-r-white' : 'border-r-[#777]'}`}
                                >
                                    {tab.icon}
                                </button>
                            ))}
                        </div>
                        <div className="flex-1 border-b border-[#888]" />
                    </div>
                    <div className="flex min-h-0 flex-1">
                        <div className="flex min-w-0 flex-1 flex-col">
                            <InfoPanel />
                            <div className="flex h-[19px] shrink-0 items-center bg-[#f0f0f0]">
                                <button aria-label="Scroll left" className="flex w-4 justify-center"><Icon className="h-2 w-2"><path d="M11 4L5 8L11 12Z" fill="#333" /></Icon></button>
                                <div className="flex h-[13px] flex-1 items-center justify-center rounded-xs border border-[#aaa] bg-linear-to-b from-[#f5f5f5] to-[#cfcfcf]">
                                    <svg viewBox="0 0 8 6" className="h-[6px] w-2"><path d="M1 0V6M4 0V6M7 0V6" stroke="#777" /></svg>
                                </div>
                                <button aria-label="Scroll right" className="flex w-[18px] justify-center"><Icon className="h-2 w-2"><path d="M5 4L11 8L5 12Z" fill="#333" /></Icon></button>
                            </div>
                        </div>
                        <div className="flex w-4 shrink-0 flex-col items-center bg-[#f0f0f0] pb-[19px]">
                            <button aria-label="Scroll up" className="flex h-4 items-center"><Icon className="h-2 w-2"><path d="M3 11L8 5L13 11Z" fill="#333" /></Icon></button>
                            <div className="flex w-[14px] flex-[355] items-center justify-center rounded-xs border border-[#aaa] bg-linear-to-r from-[#f5f5f5] to-[#cfcfcf]">
                                <svg viewBox="0 0 6 8" className="h-2 w-[6px]"><path d="M0 1H6M0 4H6M0 7H6" stroke="#777" /></svg>
                            </div>
                            <div className="flex-[122]" />
                            <button aria-label="Scroll down" className="flex h-3 items-center"><Icon className="h-2 w-2"><path d="M3 5L8 11L13 5Z" fill="#333" /></Icon></button>
                        </div>
                    </div>
                </aside>
            </main>

            {/* Status bar */}
            <div className="flex h-[15px] shrink-0 items-center gap-[2px] text-[11px] leading-[13px] font-['DejaVu_Sans_Condensed','DejaVu_Sans',sans-serif]">
                <span className="w-[100px] border-l border-t border-[#bbb]">9-5 (9600) 1999</span>
                <span className="w-[200px] border-l border-t border-[#bbb]">Trionic, 4-cyl OBDII</span>
                <span className="w-[200px] border-l border-t border-[#bbb]">Adjustment/Replacement</span>
                <span className="flex-1 border-l border-t border-[#bbb]">Temperature sensor, engine coolant</span>
                <span className="h-[14px] w-[23px] border-l border-t border-[#bbb]" />
                <span className="h-[14px] w-[28px] border-l border-t border-[#bbb]" />
                <span className="h-[14px] w-[28px] border-l border-t border-[#bbb]" />
            </div>

            <Taskbar />
        </div>
    );
};

export default App;
